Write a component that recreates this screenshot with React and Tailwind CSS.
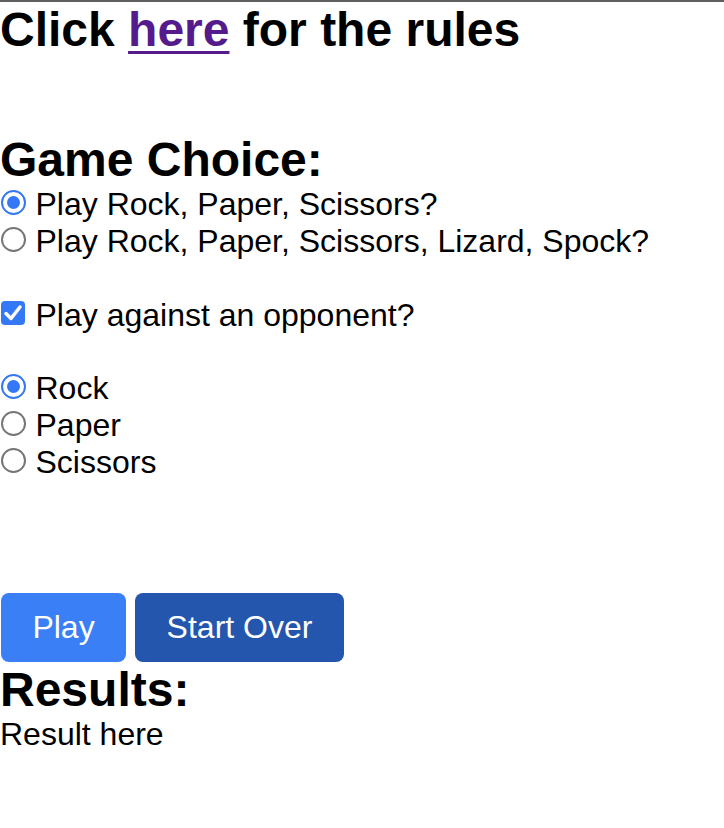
import React from "react";

function Radio({ checked }) {
  return checked ? (
    <span className="mt-[4px] ml-[1px] flex h-[25px] w-[25px] shrink-0 items-center justify-center rounded-full border-[2.5px] border-[#3478f6] bg-white">
      <span className="h-[13px] w-[13px] rounded-full bg-[#3478f6]" />
    </span>
  ) : (
    <span className="mt-[4px] ml-[1px] h-[25px] w-[25px] shrink-0 rounded-full border-2 border-[#767676] bg-white" />
  );
}

function RadioRow({ checked, children }) {
  return (
    <div className="flex items-start gap-[9.5px] h-[36.8px]">
      <Radio checked={checked} />
      <span>{children}</span>
    </div>
  );
}

export default function App() {
  return (
    <div className="min-h-screen bg-white border-t-2 border-[#5f5f5f] font-['Liberation_Sans',Arial,Helvetica,sans-serif] text-black text-[32px] leading-[36.8px]">
      <h2 className="text-[48px] font-bold leading-[55.2px]">
        Click{" "}
        <a href="#" className="text-[#551a8b] underline decoration-[3px] underline-offset-[5px]">
          here
        </a>{" "}
        for the rules
      </h2>

      <h2 className="mt-[74.8px] text-[48px] font-bold leading-[55.2px]">Game Choice:</h2>
      <div className="-mt-[1px]">
        <RadioRow checked>Play Rock, Paper, Scissors?</RadioRow>
        <RadioRow>Play Rock, Paper, Scissors, Lizard, Spock?</RadioRow>
      </div>

      <div className="mt-[36.8px] flex items-start gap-[10.5px] h-[36.8px]">
        <span className="mt-[4.5px] ml-[1px] flex h-[24px] w-[24px] shrink-0 items-center justify-center rounded-[4px] bg-[#3478f6]">
          <svg width="24" height="24" viewBox="0 0 24 24" fill="none">
            <polyline points="5,12.5 10,17.5 19,6" stroke="white" strokeWidth="3.5" strokeLinecap="round" strokeLinejoin="round" />
          </svg>
        </span>
        <span>Play against an opponent?</span>
      </div>

      <div className="mt-[36.8px]">
        <RadioRow checked>Rock</RadioRow>
        <RadioRow>Paper</RadioRow>
        <RadioRow>Scissors</RadioRow>
      </div>

      <div className="mt-[112.4px] ml-[1px] flex gap-[9px]">
        <button className="flex h-[69px] w-[125px] items-center justify-center rounded-[8px] bg-[#3a7ff6] text-white">
          Play
        </button>
        <button className="flex h-[69px] w-[209px] items-center justify-center rounded-[8px] bg-[#2456ae] text-white">
          Start Over
        </button>
      </div>

      <h2 className="text-[48px] font-bold leading-[55.2px]">Results:</h2>
      <div className="-mt-[1px]">Result here</div>
    </div>
  );
}
